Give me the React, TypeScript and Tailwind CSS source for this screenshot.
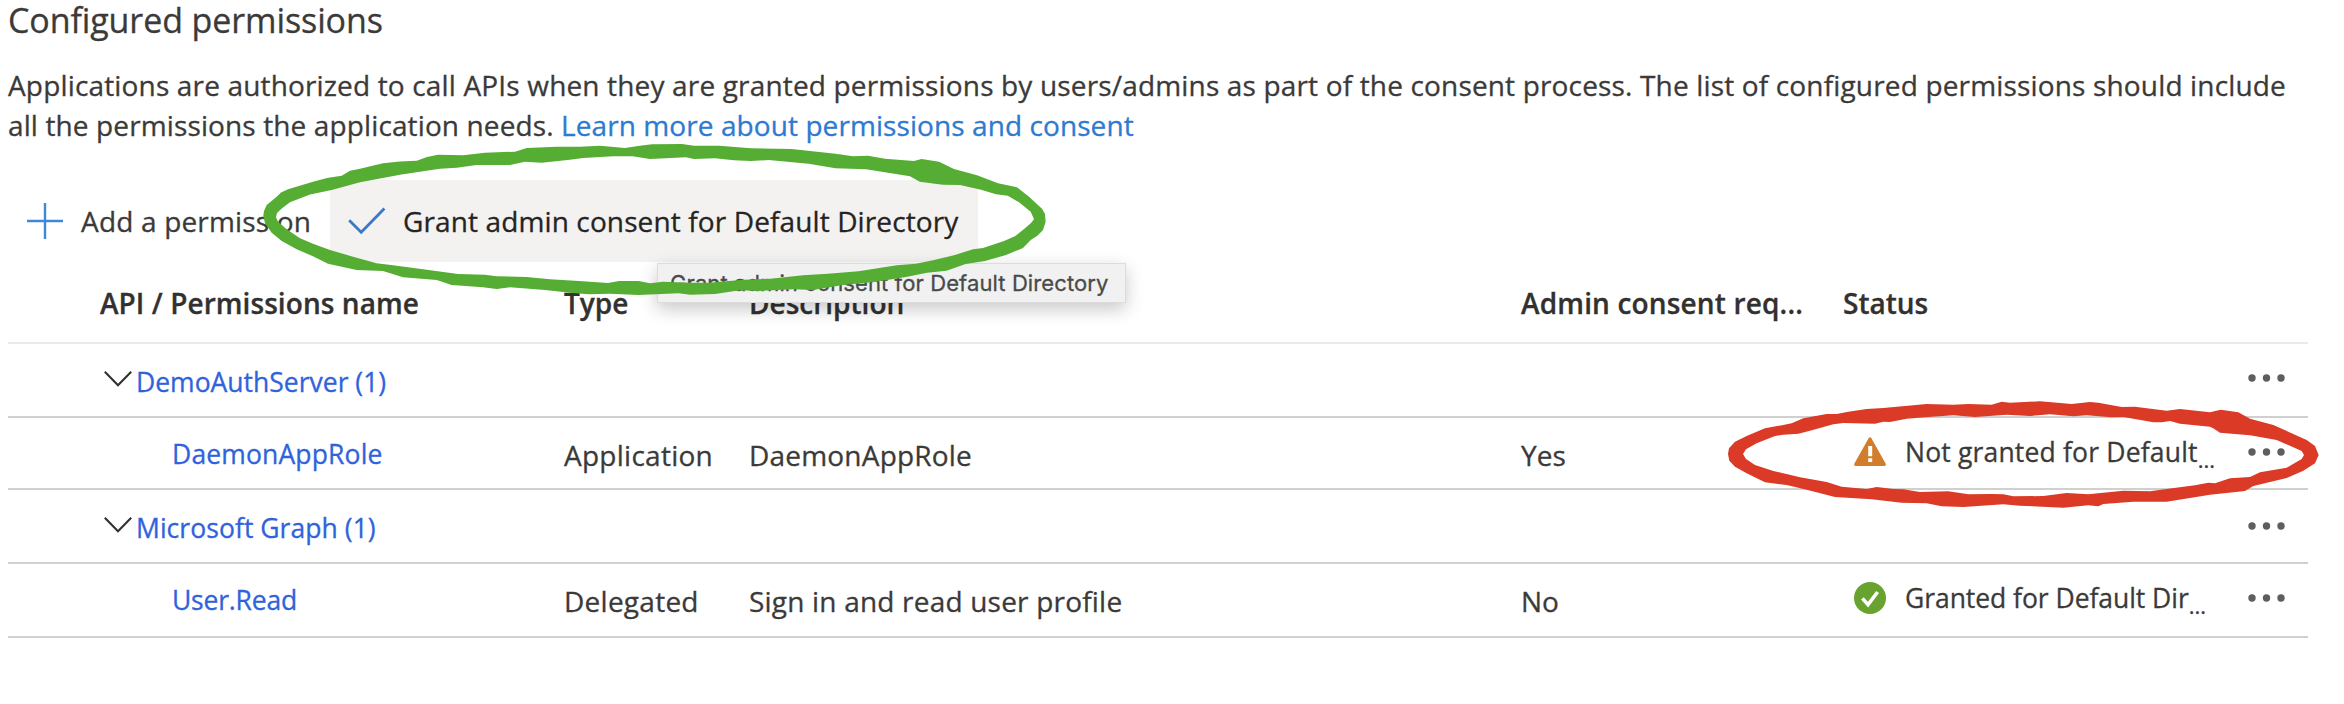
import type { ReactNode } from "react";
import clsx from "clsx";

const COLUMNS = "grid grid-cols-[556px_185px_772px_322px_405px_60px]";

function PlusIcon() {
  return (
    <svg width="36" height="36" viewBox="0 0 36 36" fill="none" stroke="#3f87d8" strokeWidth="2.4">
      <path d="M18 0V36M0 18H36" />
    </svg>
  );
}

function CheckIcon() {
  return (
    <svg width="38" height="28" viewBox="0 0 38 28" fill="none" stroke="#3b79c8" strokeWidth="2.8">
      <path d="M1.2 13.2L13.2 25.2L36.4 1.6" />
    </svg>
  );
}

function ChevronIcon() {
  return (
    <svg width="28" height="16" viewBox="0 0 28 16" fill="none" stroke="#323130" strokeWidth="2.1">
      <path d="M0.8 0.8L14 14.2L27.2 0.8" />
    </svg>
  );
}

function WarningIcon() {
  return (
    <svg width="32" height="30" viewBox="0 0 32 30">
      <path d="M14.6 1.2Q16-0.8 17.4 1.2L31.6 26.6Q32.4 29 30 29H2Q-0.4 29 0.4 26.6Z" fill="#d17d2c" />
      <path d="M14.2 9H18.2V19.2H14.2ZM14.2 21.2H18.2V25H14.2Z" fill="#fff" />
    </svg>
  );
}

function GrantedIcon() {
  return (
    <svg width="32" height="32" viewBox="0 0 32 32" fill="none">
      <circle cx="16" cy="16" r="16" fill="#68a22f" />
      <path d="M8.4 16.4L14 22.6L23.6 10" stroke="#fff" strokeWidth="3.6" />
    </svg>
  );
}

function MoreIcon() {
  return (
    <svg width="37" height="8" viewBox="0 0 37 8" fill="#5f5e5d">
      <circle cx="4" cy="4" r="3.7" />
      <circle cx="18.5" cy="4" r="3.7" />
      <circle cx="33" cy="4" r="3.7" />
    </svg>
  );
}

function GroupRow({ name, tracking, menu }: { name: string; tracking: string; menu: string }) {
  return (
    <div className="flex h-[74px] items-start border-b-2 border-[#d0d0d0]">
      <div className="flex h-[70px] w-[128px] shrink-0 items-center justify-end pr-[4px]">
        <ChevronIcon />
      </div>
      <a className={clsx("text-[26.5px] leading-[77px] text-[#2f63dc]", tracking)}>{name}</a>
      <div className={clsx("ml-auto mr-[23px] flex items-center", menu)}>
        <MoreIcon />
      </div>
    </div>
  );
}

type PermissionProps = {
  name: string;
  nameTracking: string;
  type: string;
  description: string;
  consent: string;
  icon: ReactNode;
  status: string;
  statusTracking: string;
  height: string;
  leading: string;
};

function PermissionRow(p: PermissionProps) {
  return (
    <div className={clsx(COLUMNS, "items-start border-b-2 border-[#d0d0d0]", p.height)}>
      <a className={clsx("pl-[164px] text-[26.5px] leading-[73px] text-[#2f63dc]", p.nameTracking)}>{p.name}</a>
      <span className={clsx("tracking-[0.26px]", p.leading)}>{p.type}</span>
      <span className={clsx("tracking-[0.2px]", p.leading)}>{p.description}</span>
      <span className={p.leading}>{p.consent}</span>
      <div className="flex h-[68px] items-center pl-[11px]">
        {p.icon}
        <span className={clsx("ml-[19px] text-[26.5px] leading-[36px]", p.statusTracking)}>{p.status}</span>
        <span className="pt-[14px] text-[22px] leading-[24px]">...</span>
      </div>
      <div className="flex h-[67px] items-center">
        <MoreIcon />
      </div>
    </div>
  );
}

function GreenRing() {
  return (
    <svg className="pointer-events-none absolute left-0 top-0" width="1160" height="320" viewBox="0 0 1160 320">
      <path
        fill="#55ad33"
        fillRule="evenodd"
        d="M263.3 216L264 211L266.7 205L276.7 196.7L281 192.5L288 189.3L313 181.7L327 178L341.7 175.7L350 170.7L360 168.7L383 163.3L400 161.5L416.7 160.7L427 157L438 154.7L463 155.3L485 152.7L515 151.7L526.7 148L556.7 146.7L580 146.7L600 145.7L625 148L638 146L652 144.3L682 144L694 145.7L719 145.7L751 148.3L791.5 149L835.5 153.7L853 156.3L868 155.7L885 158.7L914 161L921.6 159L939 161.7L954 169L977 175.3L998 183.3L1017 187.3L1029 196.7L1042 208.7L1045 214L1045.6 222L1043 230L1037 236L1030.7 240L1023 248L1006 255L985 261L965.6 264L946.5 270.7L927 272.7L906 277L874 282L843 285L812.6 290L793.5 289.3L759 291L740 290.3L715 294L690 294.7L678.6 293.3L638.5 295L610 293.7L588.7 294.3L570 292.7L545 290L510 287.3L496.7 289L483 287.3L451.7 285L436.7 280L403 277.3L383 271L356.7 270L328 263.7L313 256.3L296.7 249.3L281.7 241L271.7 232.7L265 223.3Z
        M276 217.3L277 213L281.7 208.5L290 202.3L310 194.5L331.7 190L360 182.3L400 174.7L423 171.3L440 168.7L456.7 167.7L476.7 165L510 165L525 161.7L541.7 162.7L570 159.7L583 158L613.6 156.3L632.7 156.3L650 159L686 157.3L694 159L715 158.3L734 160.3L751 161L768.6 160L808.7 163.7L835.5 168.3L866 169.3L910 176.3L919.7 181.7L942.7 184.7L960 185L981 189.7L996 194.3L1007.7 195.7L1019 202.3L1030.7 211.7L1034 219.3L1031 223L1025 228.3L1015.4 236L1004 241L983 248L973 249.3L954 255.3L933 260.3L916 263.7L896.8 265.3L858.5 271.3L828 273.7L803 275.3L770.5 278.7L743.7 279.7L709 282.7L690 282.7L663 281.7L650 283.3L638.5 281L619 281L608 283L579 281L550 279.3L526.7 277L496.7 276.3L485 274.7L458 274L423 269.3L393 265.3L376.7 263.3L353 256.7L330 250L313 243.7L300 238.3L286.7 229.3L278 221.7Z"
      />
    </svg>
  );
}

function RedRing() {
  return (
    <svg className="pointer-events-none absolute left-[1720px] top-[390px]" width="620" height="130" viewBox="0 0 1860 390">
      <path
        fill="#da3a26"
        fillRule="evenodd"
        d="M24 192L27 175L45 155L80 138L135 115L190 105L215 100L250 85L320 72L350 72L385 65L440 57L490 54L620 42L700 44L745 42L815 44L845 35L870 38L960 34L1055 42L1110 36L1135 38L1205 51L1245 50L1340 62L1380 57L1470 67L1502 59L1555 67L1590 86L1660 105L1760 150L1785 168L1796 195L1785 220L1750 242L1700 264L1650 276L1600 288L1575 303L1470 314L1340 335L1240 335L1150 342L1135 349L1105 346L1030 353L900 347L850 343L730 351L665 349L620 340L545 338L455 328L345 321L260 299L200 285L135 277L80 250L45 230L28 212Z
        M69 192L78 178L110 160L165 138L190 134L235 131L270 122L340 103L370 99L465 101L490 95L510 96L560 86L625 81L700 76L765 81L860 74L930 78L990 73L1060 79L1100 76L1175 82L1210 81L1300 97L1325 97L1350 93L1380 101L1470 110L1482 116L1500 128L1590 136L1670 150L1745 183L1752 195L1745 207L1700 233L1620 247L1590 261L1530 265L1485 280L1465 278L1425 286L1345 296L1290 304L1210 302L1105 313L1040 309L970 318L880 319L850 313L815 312L745 313L685 304L600 306L550 298L520 297L495 294L470 291L440 297L365 290L320 276L240 262L215 256L160 243L105 225L78 207Z"
      />
    </svg>
  );
}

export default function App() {
  return (
    <div className="relative h-[704px] w-[2344px] overflow-hidden whitespace-nowrap bg-white pl-2 pr-9 font-['Open_Sans',sans-serif] text-[28px] text-[#3b3a39] [-webkit-text-stroke:0.3px]">
      <h2 className="text-[34px] leading-[40px] tracking-[-0.1px]">Configured permissions</h2>

      <p className="mt-[25px] leading-[40px]">
        <span className="tracking-[0.16px]">
          Applications are authorized to call APIs when they are granted permissions by users/admins as part of the
          consent process. The list of configured permissions should include
        </span>
        <br />
        <span className="tracking-[0.12px]">all the permissions the application needs. </span>
        <a className="tracking-[0.08px] text-[#2e7ad1]">Learn more about permissions and consent</a>
      </p>

      <div className="mt-[35px] flex h-[82px]">
        <button className="flex w-[322px] items-center pl-[19px]">
          <PlusIcon />
          <span className="ml-[18px] tracking-[0.18px]">Add a permission</span>
        </button>
        <button className="flex w-[648px] items-center bg-[#f3f2f1] pl-[18px] text-[#252423]">
          <CheckIcon />
          <span className="ml-[17px] tracking-[0.12px]">Grant admin consent for Default Directory</span>
        </button>
      </div>

      <div className={clsx(COLUMNS, "h-[82px] border-b-2 border-[#ebebeb] font-semibold leading-[82px] text-[#323130]")}>
        <span className="pl-[92px] tracking-[0.07px]">API / Permissions name</span>
        <span>Type</span>
        <span>Description</span>
        <span className="tracking-[0.16px]">Admin consent req...</span>
        <span>Status</span>
      </div>

      <GroupRow name="DemoAuthServer (1)" tracking="" menu="h-[67px]" />
      <PermissionRow
        name="DaemonAppRole"
        nameTracking="tracking-[0.15px]"
        type="Application"
        description="DaemonAppRole"
        consent="Yes"
        icon={<WarningIcon />}
        status="Not granted for Default"
        statusTracking="tracking-[0.18px]"
        height="h-[72px]"
        leading="leading-[74px]"
      />
      <GroupRow name="Microsoft Graph (1)" tracking="tracking-[0.05px]" menu="h-[71px]" />
      <PermissionRow
        name="User.Read"
        nameTracking="tracking-[-0.2px]"
        type="Delegated"
        description="Sign in and read user profile"
        consent="No"
        icon={<GrantedIcon />}
        status="Granted for Default Dir"
        statusTracking="tracking-[-0.05px]"
        height="h-[74px]"
        leading="leading-[74px]"
      />

      <div className="absolute left-[657px] top-[263px] flex h-[40px] w-[469px] items-center border border-[#dcdcdc] bg-[#f1f1f1] pl-[12px] font-['Inter',sans-serif] text-[22px] leading-[38px] tracking-[0.1px] text-[#4a4a4a] shadow-[0_6px_18px_rgba(0,0,0,0.22)]">
        Grant admin consent for Default Directory
      </div>

      <GreenRing />
      <RedRing />
    </div>
  );
}
